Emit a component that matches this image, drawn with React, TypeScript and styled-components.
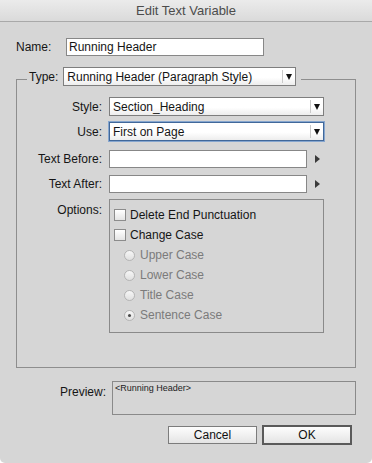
import styled, { createGlobalStyle } from "styled-components";

const GlobalStyle = createGlobalStyle`
  html, body {
    margin: 0;
    padding: 0;
    background: #fff;
  }
  body {
    font-family: "Liberation Sans", Arial, sans-serif;
  }
`;

const Window = styled.div`
  width: 372px;
  height: 463px;
  box-sizing: border-box;
  background: #d6d6d6;
  border-radius: 0 0 5px 5px;
  overflow: hidden;
  display: flex;
  flex-direction: column;
  font-size: 12px;
  color: #151515;
`;

const TitleBar = styled.div`
  height: 21px;
  flex-shrink: 0;
  border-bottom: 1px solid #a9a9a9;
  background: linear-gradient(#ebebeb, #dadada);
  display: flex;
  align-items: center;
  justify-content: center;
  font-size: 13px;
  color: #4c4c4c;
`;

const Body = styled.div`
  padding: 16px 16px 0 16px;
  display: flex;
  flex-direction: column;
`;

const Row = styled.div<{ $mt?: number; $top?: boolean }>`
  display: flex;
  align-items: ${(p) => (p.$top ? "flex-start" : "center")};
  margin-top: ${(p) => p.$mt ?? 0}px;
`;

const Label = styled.div<{ $w: number; $gap: number; $pt?: number; $left?: boolean }>`
  width: ${(p) => p.$w}px;
  margin-right: ${(p) => p.$gap}px;
  flex-shrink: 0;
  text-align: ${(p) => (p.$left ? "left" : "right")};
  line-height: 14px;
  padding-top: ${(p) => p.$pt ?? 0}px;
  white-space: nowrap;
`;

const TextField = styled.div<{ $w: number }>`
  width: ${(p) => p.$w}px;
  height: 18px;
  box-sizing: border-box;
  border: 1px solid #878787;
  background: #fff;
  padding: 0 2px;
  line-height: 16px;
  white-space: nowrap;
  overflow: hidden;
`;

const SelectBox = styled.div<{ $w: number; $focus?: boolean }>`
  width: ${(p) => p.$w}px;
  height: 19px;
  box-sizing: border-box;
  border: 1px solid ${(p) => (p.$focus ? "#41689a" : "#7e7e7e")};
  box-shadow: ${(p) => (p.$focus ? "0 0 0 1px #86a6cf" : "none")};
  background: linear-gradient(#ffffff, #ffffff 55%, #ededed);
  display: flex;
  align-items: center;
  padding-left: 3px;
  flex-shrink: 0;
`;

const SelectValue = styled.span`
  flex: 1;
  white-space: nowrap;
  overflow: hidden;
`;

const ArrowPart = styled.span`
  width: 12px;
  height: 13px;
  border-left: 1px solid #cacaca;
  display: flex;
  align-items: center;
  justify-content: center;
`;

const DownArrow = styled.span`
  width: 0;
  height: 0;
  border-left: 3.5px solid transparent;
  border-right: 3.5px solid transparent;
  border-top: 6px solid #111;
`;

const SideArrow = styled.span`
  width: 0;
  height: 0;
  margin-left: 8px;
  border-top: 4px solid transparent;
  border-bottom: 4px solid transparent;
  border-left: 5px solid #3a3a3a;
`;

const Group = styled.fieldset`
  margin: 11px 0 0 0;
  width: 340px;
  box-sizing: border-box;
  border: 1px solid #8e8e8e;
  padding: 6px 0 34px 10px;
  min-width: 0;
`;

const Legend = styled.legend`
  padding: 0 5px 5px 2px;
`;

const LegendInner = styled.div`
  display: flex;
  align-items: center;
  gap: 5px;
`;

const OptionsBox = styled.div`
  width: 215px;
  height: 134px;
  box-sizing: border-box;
  border: 1px solid #8a8a8a;
  padding: 5px 0 0 4px;
  display: flex;
  flex-direction: column;
`;

const OptionRow = styled.div<{ $indent?: boolean; $disabled?: boolean }>`
  height: 20px;
  display: flex;
  align-items: center;
  padding-left: ${(p) => (p.$indent ? 10 : 0)}px;
  color: ${(p) => (p.$disabled ? "#7b7b7b" : "#151515")};
`;

const Checkbox = styled.span`
  width: 12px;
  height: 12px;
  box-sizing: border-box;
  border: 1px solid #8c8c8c;
  background: linear-gradient(#ffffff, #e4e4e4);
  margin-right: 4px;
`;

const Radio = styled.span<{ $checked?: boolean }>`
  width: 11px;
  height: 11px;
  box-sizing: border-box;
  border-radius: 50%;
  border: 1px solid #b4b4b4;
  background: linear-gradient(#f6f6f6, #e0e0e0);
  margin-right: 5px;
  display: flex;
  align-items: center;
  justify-content: center;
  &::after {
    content: "";
    display: ${(p) => (p.$checked ? "block" : "none")};
    width: 3px;
    height: 3px;
    border-radius: 50%;
    background: #4a4a4a;
  }
`;

const PreviewBox = styled.div`
  width: 244px;
  height: 34px;
  box-sizing: border-box;
  border: 1px solid #8a8a8a;
  padding: 1px 2px;
  font-size: 9px;
  line-height: 11px;
  color: #222;
`;

const ButtonRow = styled.div`
  display: flex;
  justify-content: flex-end;
  align-items: center;
  gap: 5px;
  margin-top: 10px;
  padding-right: 4px;
`;

const Button = styled.button<{ $primary?: boolean }>`
  width: ${(p) => (p.$primary ? 90 : 89)}px;
  height: ${(p) => (p.$primary ? 20 : 18)}px;
  box-sizing: border-box;
  border: ${(p) => (p.$primary ? "2px solid #5a5a5a" : "1px solid #7c7c7c")};
  background: linear-gradient(#fdfdfd, #e4e4e4);
  font-family: "Liberation Sans", Arial, sans-serif;
  font-size: 12px;
  color: #111;
  padding: 0;
  margin: 0;
`;

function Select({ value, width, focus }: { value: string; width: number; focus?: boolean }) {
  return (
    <SelectBox $w={width} $focus={focus}>
      <SelectValue>{value}</SelectValue>
      <ArrowPart>
        <DownArrow />
      </ArrowPart>
    </SelectBox>
  );
}

const caseOptions = ["Upper Case", "Lower Case", "Title Case", "Sentence Case"];

export default function App() {
  return (
    <>
      <GlobalStyle />
      <Window>
        <TitleBar>Edit Text Variable</TitleBar>
        <Body>
          <Row>
            <Label $w={50} $gap={0} $left>
              Name:
            </Label>
            <TextField $w={198}>Running Header</TextField>
          </Row>

          <Group>
            <Legend>
              <LegendInner>
                <span>Type:</span>
                <Select value="Running Header (Paragraph Style)" width={233} />
              </LegendInner>
            </Legend>

            <Row>
              <Label $w={75} $gap={7}>Style:</Label>
              <Select value="Section_Heading" width={215} />
            </Row>
            <Row $mt={6}>
              <Label $w={75} $gap={7}>Use:</Label>
              <Select value="First on Page" width={215} focus />
            </Row>
            <Row $mt={9}>
              <Label $w={75} $gap={7}>Text Before:</Label>
              <TextField $w={198} />
              <SideArrow />
            </Row>
            <Row $mt={7}>
              <Label $w={75} $gap={7}>Text After:</Label>
              <TextField $w={198} />
              <SideArrow />
            </Row>
            <Row $mt={6} $top>
              <Label $w={75} $gap={7} $pt={4}>
                Options:
              </Label>
              <OptionsBox>
                <OptionRow>
                  <Checkbox />
                  Delete End Punctuation
                </OptionRow>
                <OptionRow>
                  <Checkbox />
                  Change Case
                </OptionRow>
                {caseOptions.map((opt) => (
                  <OptionRow key={opt} $indent $disabled>
                    <Radio $checked={opt === "Sentence Case"} />
                    {opt}
                  </OptionRow>
                ))}
              </OptionsBox>
            </Row>
          </Group>

          <Row $mt={13} $top>
            <Label $w={90} $gap={6} $pt={4}>
              Preview:
            </Label>
            <PreviewBox>&lt;Running Header&gt;</PreviewBox>
          </Row>

          <ButtonRow>
            <Button>Cancel</Button>
            <Button $primary>OK</Button>
          </ButtonRow>
        </Body>
      </Window>
    </>
  );
}
